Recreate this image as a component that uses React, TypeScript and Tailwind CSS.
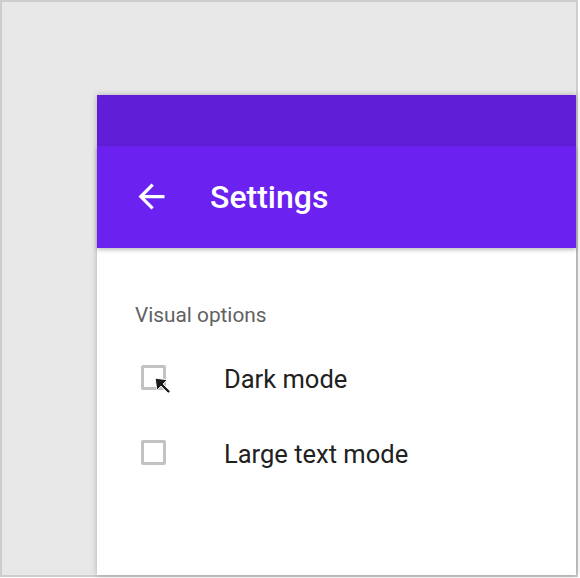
import React from 'react';

function BackArrow() {
  return (
    <svg width="39" height="39" viewBox="0 0 24 24" fill="white">
      <path d="M20 11H7.83l5.59-5.59L12 4l-8 8 8 8 1.41-1.41L7.83 13H20v-2z" />
    </svg>
  );
}

function Pointer() {
  return (
    <svg width="21" height="21" viewBox="0 0 18 18" className="absolute left-[13px] top-[12px]">
      <path
        d="M1 1 L11.4 2.4 L7.8 6 L14 12.2 L12.2 14 L6 7.8 L2.4 11.4 Z"
        fill="#1c1c1c"
        stroke="white"
        strokeWidth="0.8"
        strokeLinejoin="round"
      />
    </svg>
  );
}

function Checkbox({ hovered }: { hovered?: boolean }) {
  return (
    <div className="relative w-[25px] h-[25px]">
      <div className="w-[25px] h-[25px] border-[3px] border-[#c2c2c2] rounded-[2px] bg-white" />
      {hovered && <Pointer />}
    </div>
  );
}

function Option({ label, hovered }: { label: string; hovered?: boolean }) {
  return (
    <div className="flex items-center h-[75px]">
      <div className="w-[89px] pl-[6px] mt-[-2px]">
        <Checkbox hovered={hovered} />
      </div>
      <span className="text-[25.5px] leading-[30px] text-[#212121]">{label}</span>
    </div>
  );
}

export default function App() {
  return (
    <div className="w-[580px] h-[578px] bg-white" style={{ fontFamily: 'Roboto, "Liberation Sans", sans-serif' }}>
      <div className="w-[578px] h-[577px] border-2 border-[#cdcdcd] bg-[#e8e8e8] pl-[95px] pt-[93px] flex">
        <div className="flex-1 flex flex-col bg-white shadow-[0_0_6px_rgba(0,0,0,0.25)]">
          <div className="h-[51px] bg-[#601ed6]" />
          <div className="h-[102px] bg-[#6b21ef] flex items-center shadow-[0_2px_4px_rgba(0,0,0,0.25)] relative z-10">
            <div className="ml-[35px] mt-[-2px]">
              <BackArrow />
            </div>
            <span className="ml-[39px] text-[32px] leading-[40px] font-medium text-white mt-[-1px]">Settings</span>
          </div>
          <div className="pl-[38px] pt-[54px]">
            <div className="text-[20.8px] leading-[26px] text-[#616161] mb-[13px]">Visual options</div>
            <Option label="Dark mode" hovered />
            <Option label="Large text mode" />
          </div>
        </div>
      </div>
    </div>
  );
}
